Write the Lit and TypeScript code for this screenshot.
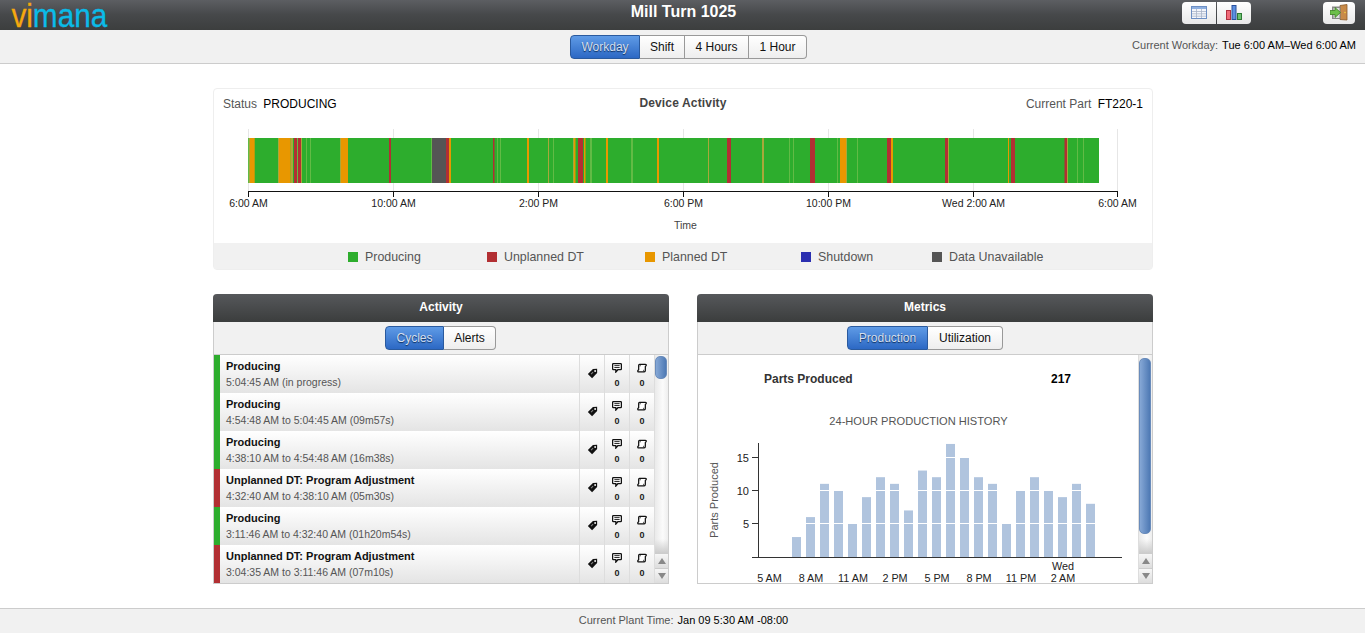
import { LitElement, html, css, svg } from "lit";
import { customElement } from "lit/decorators.js";

const G = "#2dad2d", O = "#e89700", R = "#b22f33", D = "#555555", L = "#62bb45", M = "#a8a83a";

const SEGS: [number, number, string][] = [
  [248, 249, L], [249, 250, M], [250, 254.7, O], [278, 279, M], [279, 290.7, O], [290.7, 293, M],
  [294, 297, R], [297, 298, L], [298, 301, R], [301, 302, M], [306, 307, L], [310, 311, L],
  [340, 341, M], [341, 348, O], [389, 391, R], [431, 432, L], [432, 446, D], [446, 449, R], [449, 451, O],
  [493, 494.5, R], [497, 498, L], [500, 501, L], [527, 529, O], [548, 549, M], [553, 554, L], [573, 574, M], [574, 575.5, O],
  [578, 583, R], [584, 585.5, O], [590, 592, L], [606, 608, O], [631, 633, L], [657, 659, O], [708, 709, M],
  [727, 731, R], [762, 764, M], [789, 790, L], [793, 794, L], [810, 815, R], [837, 838, L],
  [840, 846, O], [846, 847, M], [857, 858, L], [887, 891, R], [891, 893, O], [945, 948, R], [948, 949, M],
  [1008, 1009, O], [1011, 1015, R], [1064.5, 1067, R], [1067, 1068, M], [1077, 1078, L], [1083, 1084, L],
];

const TICKS: [number, string][] = [
  [248, "6:00 AM"], [393, "10:00 AM"], [538, "2:00 PM"], [683, "6:00 PM"],
  [828, "10:00 PM"], [973, "Wed 2:00 AM"], [1117, "6:00 AM"],
];

const LEGEND: [string, string, number][] = [
  ["Producing", G, 139], ["Unplanned DT", R, 158], ["Planned DT", O, 156],
  ["Shutdown", "#2b2fb0", 131], ["Data Unavailable", D, 150],
];

const ROWS: [string, string, string][] = [
  ["Producing", "5:04:45 AM (in progress)", G],
  ["Producing", "4:54:48 AM to 5:04:45 AM (09m57s)", G],
  ["Producing", "4:38:10 AM to 4:54:48 AM (16m38s)", G],
  ["Unplanned DT: Program Adjustment", "4:32:40 AM to 4:38:10 AM (05m30s)", R],
  ["Producing", "3:11:46 AM to 4:32:40 AM (01h20m54s)", G],
  ["Unplanned DT: Program Adjustment", "3:04:35 AM to 3:11:46 AM (07m10s)", R],
];

const BARS = [3, 6, 11, 10, 5, 9, 12, 11, 7, 13, 12, 17, 15, 12, 11, 5, 10, 12, 10, 9, 11, 8];
const HOURS: [number, string][] = [
  [769.5, "5 AM"], [811, "8 AM"], [853, "11 AM"], [895, "2 PM"], [937, "5 PM"], [979, "8 PM"], [1021, "11 PM"], [1063, "2 AM"],
];

const tagIcon = html`<svg width="11" height="11" viewBox="0 0 13 13"><path d="M7 1.2 L12 1 L12 6 L6 12 L1 7.2 Z" fill="#111"/><circle cx="9.6" cy="3.5" r="1.1" fill="#fff"/><path d="M4.8 7.2 L7.2 5" stroke="#888" stroke-width="1.2"/></svg>`;
const noteIcon = html`<svg width="10" height="10" viewBox="0 0 11 11"><path d="M1.5 .7 H9.5 Q10.3 .7 10.3 1.5 V6.6 Q10.3 7.4 9.5 7.4 H6.4 L4.2 10 V7.4 H1.5 Q.7 7.4 .7 6.6 V1.5 Q.7 .7 1.5 .7 Z" fill="#fff" stroke="#111" stroke-width="1.4"/><path d="M2.6 2.9 H8.4 M2.6 5 H8.4" stroke="#111" stroke-width="1"/></svg>`;
const scrollIcon = html`<svg width="10" height="10" viewBox="0 0 12 11"><path d="M3 1 H10 Q11.4 1 11 2.6 L10 3.6 V8.6 Q10 10.2 8.6 10.2 H2 Q.6 10.2 1 8.6 L2 7.6 V2.4 Q2 1 3 1 Z" fill="#fff" stroke="#111" stroke-width="1.5"/><path d="M3 1.2 Q4.4 2 3.6 3.6 M8.6 10 Q7.4 9 8.2 7.6" fill="none" stroke="#111" stroke-width="1"/></svg>`;

@customElement("app-root")
export class AppRoot extends LitElement {
  static styles = css`
    :host { display: block; font-family: "Liberation Sans", Arial, sans-serif; color: #000; }
    .page { height: 633px; display: flex; flex-direction: column; background: #fff; overflow: hidden; }
    .top { height: 30px; flex: none; display: grid; grid-template-columns: minmax(0, 1fr) auto minmax(0, 1fr); align-items: center;
      background: linear-gradient(#5c5e62, #46484a 50%, #3c3e3e); }
    .logo { font-size: 34px; line-height: 30px; height: 30px; padding-left: 13px; -webkit-text-stroke: .3px;
      transform: scaleX(.875); transform-origin: 0 0; white-space: nowrap; }
    .logo b { font-weight: 400; color: #f5a80f; }
    .logo i { font-style: normal; color: #0bbbe8; }
    .title { color: #fff; font-weight: 700; font-size: 16px; line-height: 24px; padding: 0 0 6px 2px; }
    .topright { display: flex; justify-content: flex-end; padding: 0 10px 5px 0; }
    .ib { width: 34px; height: 22px; display: flex; align-items: center; justify-content: center; background: linear-gradient(#fff, #e8e8e8); }
    .ib.l { border-radius: 4px 0 0 4px; margin-right: 1px; }
    .ib.r { border-radius: 0 4px 4px 0; margin-right: 72px; }
    .ib.s { border-radius: 4px; width: 32px; }
    .bar { height: 33px; flex: none; display: grid; grid-template-columns: minmax(0, 1fr) auto minmax(0, 1fr); align-items: start; padding-left: 12px; background: #f1f1f1; border-bottom: 1px solid #ccc; }
    .bar .seg { margin-top: 5px; }
    .cur { justify-self: end; padding: 9px 9px 0 0; line-height: 13px; font-size: 11px; white-space: nowrap; color: #555; }
    .cur span { color: #000; margin-left: 4px; }
    .seg { display: inline-flex; height: 24px; font-size: 12px; }
    .seg span { display: flex; align-items: center; justify-content: center; box-sizing: border-box; border: 1px solid #999; border-left: 0;
      background: linear-gradient(#fff, #eee); color: #111; }
    .seg span:first-child { border-left: 1px solid #999; border-radius: 4px 0 0 4px; }
    .seg span:last-child { border-radius: 0 4px 4px 0; }
    .seg span.on { background: linear-gradient(#5f9be6, #2c68c4); border-color: #2a5a9e; color: #d4dfee; text-shadow: 0 1px 1px #0e2f5e; }
    .main { flex: 1; min-height: 0; padding: 24px 212px 0 213px; }
    .card { height: 182px; box-sizing: border-box; border: 1px solid #eee; border-radius: 4px; display: flex; flex-direction: column; }
    .chead { height: 31px; flex: none; display: grid; grid-template-columns: 1fr auto 1fr; align-items: start; padding: 0 9px; font-size: 12px; line-height: 30px; color: #555; }
    .chead b { color: #444; line-height: 28px; letter-spacing: .15px; }
    .chead .rt { text-align: right; }
    .chead em { font-style: normal; color: #000; margin-left: 3px; }
    .tl { display: block; flex: none; }
    .tl text { font-family: "Liberation Sans", Arial, sans-serif; }
    .legend { flex: 1; background: #f1f1f1; display: flex; align-items: center; padding: 1px 0 0 134px; font-size: 12.4px; color: #555; }
    .li { display: flex; align-items: center; gap: 7px; white-space: nowrap; }
    .sw { width: 10px; height: 10px; }
    .panels { margin-top: 24px; display: flex; gap: 28px; height: 290px; }
    .panel { width: 456px; display: flex; flex-direction: column; box-sizing: border-box; border: 1px solid #ccc; border-top: 0; border-radius: 4px 4px 0 0; }
    .phead { height: 28px; flex: none; box-sizing: border-box; padding-bottom: 2px; margin: 0 -1px; border-radius: 4px 4px 0 0; background: linear-gradient(#56585b, #3b3d3d); color: #fff; font-weight: 700; font-size: 12px;
      display: flex; align-items: center; justify-content: center; }
    .ptool { height: 33px; flex: none; box-sizing: border-box; padding-top: 4px; background: #f1f1f1; border-bottom: 1px solid #ccc; display: flex; align-items: flex-start; justify-content: center; }
    .ptool.nudge { padding-right: 1px; }
    .pbody { flex: 1; min-height: 0; display: flex; overflow: hidden; }
    .list { flex: 1; min-width: 0; }
    .row { height: 38px; display: flex; box-sizing: border-box; background: linear-gradient(#fff, #e4e4e4); }
    .strip { width: 6px; flex: none; }
    .txt { flex: 1; min-width: 0; padding: 3px 0 0 6px; font-size: 11px; line-height: 16px; color: #555; white-space: nowrap; }
    .txt b { display: block; color: #111; }
    .txt span { font-size: 10.5px; }
    .cell { width: 25px; flex: none; box-sizing: border-box; border-left: 1px solid #ddd; padding-top: 8px; display: flex; flex-direction: column; align-items: center; font-size: 9px; font-weight: 700; line-height: 10px; color: #222; gap: 5px; }
    .cell.tag { padding-top: 13px; }
    .sb { width: 14px; flex: none; display: flex; flex-direction: column; background: linear-gradient(90deg, #eaeaea, #fbfbfb 60%, #eee); box-sizing: border-box; border-left: 1px solid #ddd; }
    .sbt { flex: 1; padding: 1px 0; min-height: 0; background: linear-gradient(transparent calc(100% - 14px), #ccc); }
    .th { margin: 0 1px 0 0; border-radius: 5px; background: linear-gradient(90deg, #86a8d6, #4e79b4); border: 1px solid #6a8cbb; box-sizing: border-box; }
    .arr { height: 14px; flex: none; display: flex; align-items: center; justify-content: center; border-top: 1px solid #ccc; background: linear-gradient(#f6f6f6, #ddd); }
    .content { flex: 1; min-width: 0; display: flex; flex-direction: column; }
    .parts { height: 45px; flex: none; display: flex; align-items: center; padding-left: 66px; font-size: 12px; font-weight: 700; color: #333; padding-top: 2px; box-sizing: border-box; }
    .parts span { width: 287px; }
    .parts b { color: #000; }
    .hist { display: block; flex: none; }
    .hist text { font-family: "Liberation Sans", Arial, sans-serif; }
    .foot { height: 25px; flex: none; box-sizing: border-box; padding: 0 0 2px 2px; border-top: 1px solid #ccc; background: #f1f1f1; display: flex; align-items: center; justify-content: center; font-size: 11px; color: #555; }
    .foot span { color: #000; margin-left: 4px; }
  `;

  private seg(items: [string, number][]) {
    return html`<div class="seg">${items.map(([t, w], i) => html`<span class=${i === 0 ? "on" : ""} style="width:${w}px">${t}</span>`)}</div>`;
  }

  private timeline() {
    return html`<svg class="tl" width="938" height="123" viewBox="214 120 938 123">
      ${TICKS.map(([x]) => svg`<line x1=${x + 0.5} x2=${x + 0.5} y1="129" y2="191" stroke="#e6e6e6"/>`)}
      <rect x="248" y="138" width="851" height="45" fill=${G}/>
      ${SEGS.map(([a, b, c]) => svg`<rect x=${a} y="138" width=${b - a} height="45" fill=${c}/>`)}
      <line x1="248" x2="1118" y1="191.5" y2="191.5" stroke="#111"/>
      ${TICKS.map(([x, t]) => svg`<line x1=${x + 0.5} x2=${x + 0.5} y1="191" y2="197" stroke="#111"/>
        <text x=${x + 0.5} y="207" text-anchor="middle" font-size="10.5" fill="#222">${t}</text>`)}
      <text x="685.5" y="229" text-anchor="middle" font-size="10.5" fill="#444">Time</text>
    </svg>`;
  }

  private hist() {
    const y = (v: number) => 557 - v * 6.65;
    return html`<svg class="hist" width="440" height="184" viewBox="698 400 440 184">
      <text x="918.5" y="425" text-anchor="middle" font-size="11.1" fill="#555">24-HOUR PRODUCTION HISTORY</text>
      ${BARS.map((v, i) => svg`<rect x=${792 + i * 14} y=${y(v)} width="9" height=${v * 6.65} fill="#b0c4de"/>`)}
      ${[457, 490, 523].map((g) => svg`<line x1="758" x2="1122" y1=${g + 0.5} y2=${g + 0.5} stroke="#fff" stroke-width="1"/>`)}
      <line x1="758.5" x2="758.5" y1="443" y2="557" stroke="#333"/>
      <line x1="752" x2="1122" y1="557.5" y2="557.5" stroke="#333"/>
      ${[[15, 457], [10, 490], [5, 523]].map(([t, g]) => svg`<line x1="752" x2="758" y1=${g + 0.5} y2=${g + 0.5} stroke="#333"/>
        <text x="749" y=${g + 4.5} text-anchor="end" font-size="11" fill="#222">${t}</text>`)}
      <text transform="translate(717.5 500) rotate(-90)" text-anchor="middle" font-size="11" fill="#555">Parts Produced</text>
      ${HOURS.map(([x, t]) => svg`<text x=${x} y="582" text-anchor="middle" font-size="10.8" fill="#222">${t}</text>`)}
      <text x="1063" y="570" text-anchor="middle" font-size="10.8" fill="#222">Wed</text>
    </svg>`;
  }

  private scrollbar(h: number, top: number) {
    return html`<div class="sb">
      <div class="sbt"><div class="th" style="height:${h}px;margin-top:${top}px"></div></div>
      <div class="arr"><svg width="8" height="6" viewBox="0 0 8 6"><path d="M4 0 L8 6 H0 Z" fill="#888"/></svg></div>
      <div class="arr"><svg width="8" height="6" viewBox="0 0 8 6"><path d="M0 0 H8 L4 6 Z" fill="#888"/></svg></div>
    </div>`;
  }

  render() {
    return html`<div class="page">
      <div class="top">
        <div class="logo"><b>vi</b><i>mana</i></div>
        <div class="title">Mill Turn 1025</div>
        <div class="topright">
          <div class="ib l"><svg width="16" height="13" viewBox="0 0 16 13"><rect x=".5" y=".5" width="15" height="12" fill="#f4f6fb" stroke="#6d8fc4"/><rect x="1" y="1" width="14" height="2" fill="#8fb0e0"/><path d="M1 5.5H15M1 7.8H15M1 10.2H15M5.5 3V12M10.5 3V12" stroke="#a8b4c8" stroke-width=".8"/></svg></div>
          <div class="ib r"><svg width="16" height="15" viewBox="0 0 16 15"><rect x=".5" y="5.5" width="4" height="9" fill="#f06a78" stroke="#b03040"/><rect x="6" y=".5" width="4" height="14" fill="#5c8fe0" stroke="#28509c"/><rect x="11.5" y="8.5" width="4" height="6" fill="#6cc070" stroke="#2c7a34"/></svg></div>
          <div class="ib s"><svg width="18" height="17" viewBox="0 0 18 17"><path d="M10 1.5 L17 .5 V16 L10 15.5 Z" fill="#c88a48" stroke="#8c5a28" stroke-width=".8"/><rect x="2" y="2.5" width="8.5" height="12.5" fill="#888"/><rect x="3.5" y="4" width="6" height="10" fill="#ddd"/><circle cx="15" cy="8.5" r=".8" fill="#f4d040"/><path d="M0 6.5 H5 V3.5 L10.5 8.5 L5 13.5 V10.5 H0 Z" fill="#6cbf4a" stroke="#3c8024" stroke-width=".8"/></svg></div>
        </div>
      </div>
      <div class="bar">
        <div></div>
        ${this.seg([["Workday", 70], ["Shift", 45], ["4 Hours", 64], ["1 Hour", 58]])}
        <div class="cur">Current Workday:<span>Tue 6:00 AM–Wed 6:00 AM</span></div>
      </div>
      <div class="main">
        <div class="card">
          <div class="chead">
            <div>Status <em>PRODUCING</em></div>
            <b>Device Activity</b>
            <div class="rt">Current Part <em>FT220-1</em></div>
          </div>
          ${this.timeline()}
          <div class="legend">
            ${LEGEND.map(([t, c, w]) => html`<div class="li" style="width:${w}px"><div class="sw" style="background:${c}"></div>${t}</div>`)}
          </div>
        </div>
        <div class="panels">
          <div class="panel">
            <div class="phead">Activity</div>
            <div class="ptool nudge">${this.seg([["Cycles", 59], ["Alerts", 52]])}</div>
            <div class="pbody">
              <div class="list">
                ${ROWS.map(([a, b, c]) => html`<div class="row">
                  <div class="strip" style="background:${c}"></div>
                  <div class="txt"><b>${a}</b><span>${b}</span></div>
                  <div class="cell tag">${tagIcon}</div>
                  <div class="cell">${noteIcon}<span>0</span></div>
                  <div class="cell">${scrollIcon}<span>0</span></div>
                </div>`)}
              </div>
              ${this.scrollbar(23, 0)}
            </div>
          </div>
          <div class="panel">
            <div class="phead">Metrics</div>
            <div class="ptool">${this.seg([["Production", 81], ["Utilization", 75]])}</div>
            <div class="pbody">
              <div class="content">
                <div class="parts"><span>Parts Produced</span><b>217</b></div>
                ${this.hist()}
              </div>
              ${this.scrollbar(176, 2)}
            </div>
          </div>
        </div>
      </div>
      <div class="foot">Current Plant Time:<span>Jan 09 5:30 AM -08:00</span></div>
    </div>`;
  }
}
